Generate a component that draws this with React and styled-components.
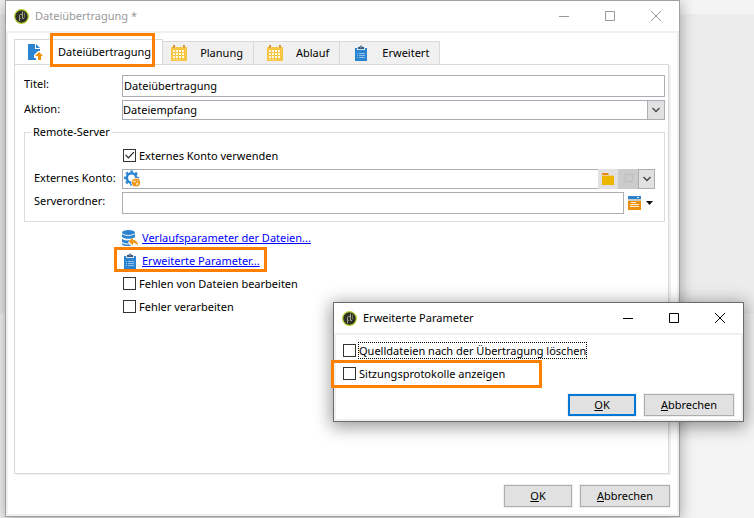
import React, { useState } from "react";
import styled, { createGlobalStyle } from "styled-components";

const GlobalStyle = createGlobalStyle`
  * {
    box-sizing: border-box;
  }
  body {
    margin: 0;
    background: #f4f4f4;
    color: #000;
    font: 11px/16px "Noto Sans", "Open Sans", sans-serif;
  }
  button,
  input,
  select {
    font: inherit;
    color: inherit;
  }
`;

const Desktop = styled.main`
  position: relative;
  min-height: 100vh;
  padding: 0 74px 1px 5px;
  overflow: hidden;
  background: linear-gradient(
    #f4f4f4 14px,
    #ececec 14px,
    #ececec 314px,
    #f4f4f4 314px
  );
`;

const Window = styled.section`
  display: flex;
  flex-direction: column;
  background: #fff;
  border: 1px solid ${(props) => (props.$active ? "#6b6b6b" : "#a0a0a0")};
  box-shadow: ${(props) =>
    props.$active
      ? "0 3px 16px 2px rgba(0, 0, 0, 0.4)"
      : "0 3px 14px 0 rgba(0, 0, 0, 0.35)"};
`;

const FloatingWindow = styled(Window)`
  position: absolute;
  top: 302px;
  right: 10px;
  width: 411px;
`;

const TitleBar = styled.header`
  display: flex;
  align-items: center;
  height: 30px;
  padding-left: 8px;
  color: ${(props) => (props.$active ? "#000" : "#999")};
`;

const Title = styled.h1`
  flex: 1;
  margin: 0;
  padding-left: 6px;
  font-size: 11px;
  font-weight: 400;
`;

const CaptionButton = styled.button`
  display: flex;
  align-items: center;
  justify-content: center;
  width: 46px;
  height: 30px;
  padding: 0;
  border: 0;
  background: none;
`;

const Client = styled.div`
  display: flex;
  flex-direction: column;
  border: 2px solid #f0f0f0;
  padding: ${(props) => props.$padding};
`;

const TabList = styled.div`
  display: flex;
  align-items: flex-end;
`;

const Tab = styled.button`
  display: flex;
  align-items: center;
  gap: ${(props) => (props.$selected ? "15px" : "13px")};
  height: ${(props) => (props.$selected ? "26px" : "24px")};
  margin-bottom: -1px;
  padding: ${(props) => (props.$selected ? "0 11px 0 12px" : "0 10px 0 13px")};
  border: 1px solid #d9d9d9;
  border-bottom-color: ${(props) => (props.$selected ? "#fff" : "#d9d9d9")};
  background: ${(props) => (props.$selected ? "#fff" : "#f0f0f0")};
  & + & {
    border-left-width: 0;
  }
  &:nth-child(2) {
    padding-left: 8px;
  }
`;

const Marked = styled.span`
  position: relative;
`;

const Highlight = styled.span`
  position: absolute;
  inset: ${(props) => props.$inset};
  border: 3px solid #ff8000;
  pointer-events: none;
`;

const Panel = styled.div`
  display: flex;
  flex-direction: column;
  min-height: 410px;
  margin-right: 1px;
  padding: 10px 3px 10px 9px;
  border: 1px solid #d9d9d9;
  box-shadow: 2px 1px 0 #f0f0f0;
`;

const Field = styled.div`
  display: grid;
  grid-template-columns: ${(props) => (props.$nested ? "88px" : "98px")} 1fr auto;
  align-items: center;
  margin-bottom: 3px;
`;

const FieldLabel = styled.label`
  align-self: start;
  padding-top: 1px;
  white-space: nowrap;
`;

const TextInput = styled.input`
  width: 100%;
  min-width: 0;
  height: 22px;
  padding: 0 1px 2px;
  border: 1px solid #abadb3;
  border-radius: 0;
  background: #fff;
  outline: none;
`;

const SelectBox = styled.div`
  display: grid;
  grid-template-columns: 1fr 17px;
  height: 20px;
  border: 1px solid #abadb3;
`;

const Select = styled.select`
  grid-area: 1 / 1 / 2 / 3;
  appearance: none;
  width: 100%;
  padding: 0;
  border: 0;
  border-radius: 0;
  background: none;
  outline: none;
`;

const Arrow = styled.span`
  grid-area: 1 / 2;
  display: flex;
  align-items: center;
  justify-content: center;
  border-left: 1px solid #abadb3;
  background: #e1e1e1;
  pointer-events: none;
`;

const Group = styled.fieldset`
  min-width: 0;
  margin: 1px 0 0;
  padding: 8px 9px 4px;
  border: 1px solid #dcdcdc;
`;

const Legend = styled.legend`
  margin-left: -3px;
  padding: 0 2px;
`;

const AccountBox = styled.div`
  display: flex;
  align-items: stretch;
  height: 20px;
  padding-left: 1px;
  border: 1px solid #abadb3;
  border-right: 0;
`;

const AccountInput = styled.input`
  flex: 1;
  min-width: 0;
  padding: 0 2px;
  border: 0;
  background: none;
  outline: none;
`;

const ToolButton = styled.button`
  display: flex;
  align-items: center;
  justify-content: center;
  width: 20px;
  margin: -1px 0;
  padding: 0;
  border: 0;
  background: ${(props) => (props.disabled ? "#cccccc" : "#e1e1e1")};
`;

const DropButton = styled(ToolButton)`
  width: 17px;
  border: 1px solid #abadb3;
`;

const FolderButton = styled.button`
  display: flex;
  align-items: center;
  gap: 5px;
  padding: 0 2px 0 4px;
  border: 0;
  background: none;
`;

const Options = styled.div`
  display: flex;
  flex-direction: column;
  align-items: flex-start;
  margin: ${(props) => props.$margin};
`;

const OptionLine = styled.div`
  position: relative;
  display: flex;
  align-items: center;
  gap: 4px;
  height: 23px;
`;

const Link = styled.a`
  color: #0000ff;
  text-decoration: underline;
`;

const CheckRow = styled.label`
  position: relative;
  display: flex;
  align-items: center;
  gap: ${(props) => (props.$focused ? "2px" : "3px")};
  height: 23px;
  padding-left: 1px;
`;

const CheckBox = styled.input.attrs({ type: "checkbox" })`
  appearance: none;
  flex: none;
  width: 13px;
  height: 13px;
  margin: 0;
  border: 1px solid #333;
  background: #fff;
  outline: none;
  &:checked::after {
    content: "";
    display: block;
    height: 11px;
    background: #222;
    clip-path: polygon(10% 47%, 18% 41%, 40% 64%, 86% 16%, 94% 23%, 40% 79%);
  }
`;

const CheckText = styled.span`
  line-height: 15px;
  border: ${(props) => (props.$focused ? "1px dotted #000" : "0")};
`;

const Actions = styled.div`
  display: flex;
  justify-content: flex-end;
  gap: 8px;
  margin-top: ${(props) => props.$top};
`;

const Button = styled.button`
  width: ${(props) => (props.$wide ? "90px" : "68px")};
  height: 22px;
  padding: 0;
  border: ${(props) => (props.$default ? "2px solid #0078d7" : "1px solid #adadad")};
  background: #e1e1e1;
  box-shadow: 0 0 0 1px #f0f0f0;
  line-height: 16px;
`;

const Logo = () => (
  <svg width="15" height="15" viewBox="0 0 15 15">
    <circle cx="7.5" cy="7.5" r="6.8" fill="#2e3126" stroke="#b5cf2a" strokeWidth="1.2" />
    <g fill="none" stroke="#a3a88f">
      <path d="M8.5 2.5v7h1.500" />
      <path d="M8 5.500H6.500a1 1 0 0 0-1 1v5.500" />
      <path d="M5.500 9.500h1.500M10.500 3.500v5" stroke="#70775a" />
    </g>
  </svg>
);

const captionShapes = {
  Minimieren: "M0 5.5h10",
  Maximieren: "M.5.5h9v9h-9z",
  Schließen: "M0 0l10 10M10 0L0 10",
};

const CaptionButtons = () =>
  Object.entries(captionShapes).map(([name, d]) => (
    <CaptionButton key={name} type="button" aria-label={name}>
      <svg width="10" height="10" viewBox="0 0 10 10">
        <path d={d} fill="none" stroke="currentColor" />
      </svg>
    </CaptionButton>
  ));

const FileUploadIcon = () => (
  <svg width="16" height="16" viewBox="0 0 16 16">
    <path d="M1 0h7v5h5v2h-2l-4 4v3h2v2H1z" fill="#2c83d0" />
    <path d="M9 0l4 4H9z" fill="#2c83d0" />
    <path d="M12 8l4 4h-2v4h-3v-4H8z" fill="#f29100" />
  </svg>
);

const CalendarIcon = () => (
  <svg width="16" height="16" viewBox="0 0 16 16">
    <path d="M0 2h16v14H0z" fill="#f6c644" />
    <path d="M2 0h2v3H2zM12 0h2v3h-2z" fill="#d99a3c" />
    <path d="M4 1h1v2H4zM11 1h1v2h-1z" fill="#fbe3a0" />
    <g fill="#fff8e0">
      {[5, 8, 11].map((y) =>
        [2, 5, 8, 11].map((x) => (
          <rect key={`${x}-${y}`} x={x} y={y} width="2" height="2" />
        ))
      )}
      <path d="M2 14h2v.5H2zM5 14h2v.5H5zM8 14h2v.5H8z" />
    </g>
  </svg>
);

const ClipboardIcon = () => (
  <svg width="16" height="16" viewBox="0 0 16 16">
    <path d="M2 3h12v13H2z" fill="#2c83d0" />
    <path d="M4 3h8v2H4z" fill="#d5e4f1" />
    <path d="M5 4V2h1.5a1.5 1.5 0 0 1 3 0H11v2z" fill="#34597c" />
    <path d="M7.5 1.5h1v1h-1z" fill="#fff" />
    <path
      d="M4 8h1v1H4zM6 8h6v1H6zM4 10h1v1H4zM6 10h6v1H6zM4 12h1v1H4zM6 12h6v1H6z"
      fill="#8fc0ea"
    />
  </svg>
);

const GearIcon = () => (
  <svg width="17" height="18" viewBox="0 0 17 18">
    <circle cx="7.5" cy="8" r="4.7" fill="none" stroke="#2c83d0" strokeWidth="2.6" />
    <circle
      cx="7.5"
      cy="8"
      r="6.6"
      fill="none"
      stroke="#2c83d0"
      strokeWidth="2"
      strokeDasharray="2.59 2.59"
      strokeDashoffset="1.3"
    />
    <circle cx="12" cy="12.5" r="4.8" fill="#fff" />
    <circle cx="12" cy="12.5" r="4.1" fill="#ed9414" />
    <path
      d="M9 11l2-1 .8 1.5-1.3 1.6zM13 10l1.7 1-1.5.8zM12 13l2.5-.5-.8 2.5-1.7.3z"
      fill="#fbe0b0"
    />
  </svg>
);

const FolderIcon = () => (
  <svg width="12" height="12" viewBox="0 0 12 12">
    <path d="M0 0h6l1 2H0z" fill="#e88b1a" />
    <path d="M0 2h12v2H0z" fill="#f0cf96" />
    <path d="M0 3h12v9H0z" fill="#eeb600" />
  </svg>
);

const MagnifierIcon = () => (
  <svg width="14" height="14" viewBox="0 0 14 14">
    <g fill="none" stroke="#bcbcbc">
      <circle cx="8" cy="6" r="3.8" />
      <path d="M5 9l-3.5 3.5M3.5 1.5l2 1.5M12.5 1.5l-2 1.5M12.5 10.5l-2-1.5" />
    </g>
  </svg>
);

const ChevronIcon = () => (
  <svg width="8" height="6" viewBox="0 0 8 6">
    <path d="M.5 1L4 4.5 7.5 1" fill="none" stroke="#444" strokeWidth="1.3" />
  </svg>
);

const ServerFolderIcon = () => (
  <svg width="13" height="14" viewBox="0 0 13 14">
    <path d="M0 0h13v4H0z" fill="#2c83d0" />
    <path d="M9 1h2v1H9z" fill="#d6e9f8" />
    <path d="M0 3h13v2H0z" fill="#c9cdc8" />
    <path d="M0 5h13v9H0z" fill="#ee8f0b" />
    <path d="M3 6h5v1H3zM2 8h9v1H2zM2 10h9v1H2z" fill="#fff0d8" />
  </svg>
);

const DatabaseIcon = () => (
  <svg width="16" height="16" viewBox="0 0 16 16">
    <g fill="#2c83d0">
      <ellipse cx="6.5" cy="2.5" rx="6.5" ry="2.5" />
      <path d="M0 4c2 2.4 11 2.4 13 0v3C11 9.4 2 9.4 0 7z" />
      <path d="M0 8.5c2 2.2 5 2.2 8 1.5L6 12l1 1.5c-3 .2-6-.5-7-2z" />
      <path d="M0 13c2 1.5 5 1.8 8 1.5l1 1.3c-4 .4-8 .2-9-1.3z" />
    </g>
    <path d="M6.5 11.5L11 7.5v2.5c3 0 5 2 5 6-1-2-2.5-3-5-3v2.5z" fill="#f29a1a" />
  </svg>
);

const TriangleIcon = () => (
  <svg width="7" height="4" viewBox="0 0 7 4">
    <path d="M0 0h7L3.5 4z" fill="#111" />
  </svg>
);

const tabs = [
  { name: "Dateiübertragung", Icon: FileUploadIcon },
  { name: "Planung", Icon: CalendarIcon },
  { name: "Ablauf", Icon: CalendarIcon },
  { name: "Erweitert", Icon: ClipboardIcon },
];

const Check = ({ label, focused, defaultChecked, children }) => (
  <CheckRow $focused={focused}>
    <CheckBox defaultChecked={defaultChecked} />
    <CheckText $focused={focused}>{label}</CheckText>
    {children}
  </CheckRow>
);

const DialogButtons = ({ top, active }) => (
  <Actions $top={top}>
    <Button type="button" $default={active}>
      <u>O</u>K
    </Button>
    <Button type="button" $wide>
      <u>A</u>bbrechen
    </Button>
  </Actions>
);

const TransferWindow = () => {
  const [selected, setSelected] = useState(0);

  return (
    <Window aria-label="Dateiübertragung">
      <TitleBar>
        <Logo />
        <Title>Dateiübertragung *</Title>
        <CaptionButtons />
      </TitleBar>
      <Client $padding="6px 7px 7px 6px">
        <TabList role="tablist">
          {tabs.map(({ name, Icon }, index) => (
            <Tab
              key={name}
              type="button"
              role="tab"
              aria-selected={index === selected}
              $selected={index === selected}
              onClick={() => setSelected(index)}
            >
              <Icon />
              <Marked>
                {name}
                {index === 0 && <Highlight $inset="-11px -4px -7px -8px" />}
              </Marked>
            </Tab>
          ))}
        </TabList>
        <Panel role="tabpanel">
          <Field>
            <FieldLabel htmlFor="title">Titel:</FieldLabel>
            <TextInput id="title" defaultValue="Dateiübertragung" />
          </Field>
          <Field>
            <FieldLabel htmlFor="action">Aktion:</FieldLabel>
            <SelectBox>
              <Select id="action">
                <option>Dateiempfang</option>
              </Select>
              <Arrow>
                <ChevronIcon />
              </Arrow>
            </SelectBox>
          </Field>
          <Group>
            <Legend>Remote-Server</Legend>
            <Options $margin="-4px 0 2px 88px">
              <Check label="Externes Konto verwenden" defaultChecked />
            </Options>
            <Field $nested>
              <FieldLabel htmlFor="account">Externes Konto:</FieldLabel>
              <AccountBox>
                <GearIcon />
                <AccountInput id="account" />
                <ToolButton type="button" aria-label="Ordner">
                  <FolderIcon />
                </ToolButton>
                <ToolButton type="button" aria-label="Suchen" disabled>
                  <MagnifierIcon />
                </ToolButton>
                <DropButton type="button" aria-label="Auswahl">
                  <ChevronIcon />
                </DropButton>
              </AccountBox>
            </Field>
            <Field $nested>
              <FieldLabel htmlFor="folder">Serverordner:</FieldLabel>
              <TextInput id="folder" />
              <FolderButton type="button" aria-label="Serverordner">
                <ServerFolderIcon />
                <TriangleIcon />
              </FolderButton>
            </Field>
          </Group>
          <Options $margin="4px 0 0 98px">
            <OptionLine>
              <DatabaseIcon />
              <Link href="#verlauf">Verlaufsparameter der Dateien...</Link>
            </OptionLine>
            <OptionLine>
              <ClipboardIcon />
              <Link href="#erweitert">Erweiterte Parameter...</Link>
              <Highlight $inset="-2px -7px 0 -8px" />
            </OptionLine>
            <Check label="Fehlen von Dateien bearbeiten" />
            <Check label="Fehler verarbeiten" />
          </Options>
        </Panel>
        <DialogButtons top="11px" />
      </Client>
    </Window>
  );
};

const ParameterDialog = () => (
  <FloatingWindow $active role="dialog" aria-label="Erweiterte Parameter">
    <TitleBar $active>
      <Logo />
      <Title>Erweiterte Parameter</Title>
      <CaptionButtons />
    </TitleBar>
    <Client $padding="4px 7px 3px 6px">
      <Options $margin="0">
        <Check label="Quelldateien nach der Übertragung löschen" focused />
        <Check label="Sitzungsprotokolle anzeigen">
          <Highlight $inset="-2px -37px -3px -11px" />
        </Check>
      </Options>
      <DialogButtons top="9px" active />
    </Client>
  </FloatingWindow>
);

const App = () => (
  <>
    <GlobalStyle />
    <Desktop>
      <TransferWindow />
      <ParameterDialog />
    </Desktop>
  </>
);

export default App;
